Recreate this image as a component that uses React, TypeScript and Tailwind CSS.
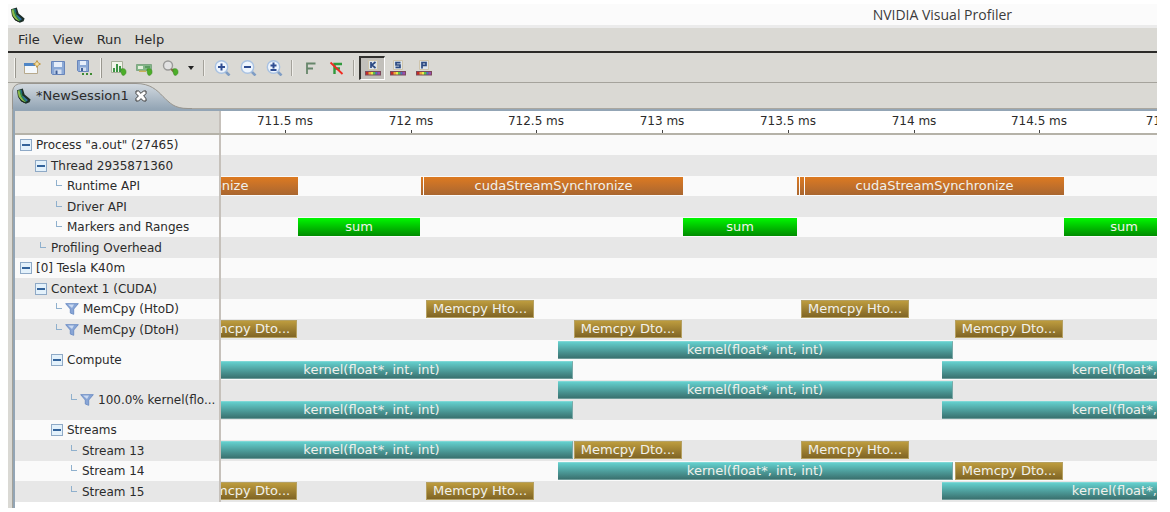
import React from "react";

type Kind = "api" | "range" | "copy" | "kernel";
type Bar = { kind: Kind; start: number; end: number; text?: string };
type Row = {
  label: string;
  depth: number;
  group?: boolean;
  filter?: boolean;
  lanes?: Bar[][];
};

const SPAN = 936;

const FILL: Record<Kind, string> = {
  api: "bg-linear-to-b from-[#dd7a20] to-[#a9662f]",
  range: "bg-linear-to-b from-[#00f800] to-[#008c00]",
  copy: "border border-[#b5a061] bg-linear-to-b from-[#bd9c3e] to-[#806525]",
  kernel: "border-y border-r border-t-[#7fd8d6] border-r-[#7aa9a8] border-b-[#6f9b99] bg-linear-to-b from-[#63cfcd] to-[#3a7270]",
};

const KERNEL = "kernel(float*, int, int)";
const SYNC = "cudaStreamSynchronize";
const kernel = (start: number, end: number): Bar => ({ kind: "kernel", start, end, text: KERNEL });
const sync = (start: number, end: number): Bar => ({ kind: "api", start, end, text: SYNC });
const tick = (start: number, end: number): Bar => ({ kind: "api", start, end });
const sum = (start: number, end: number): Bar => ({ kind: "range", start, end, text: "sum" });
const htod = (start: number): Bar => ({ kind: "copy", start, end: start + 108, text: "Memcpy Hto..." });
const dtoh = (start: number): Bar => ({ kind: "copy", start, end: start + 108, text: "Memcpy Dto..." });

const k13 = kernel(-50, 352);
const k14 = kernel(337, 732);
const k15 = kernel(721, 1118);

const ROWS: Row[] = [
  { label: 'Process "a.out" (27465)', depth: 0, group: true },
  { label: "Thread 2935871360", depth: 1, group: true },
  {
    label: "Runtime API",
    depth: 2,
    lanes: [[sync(-180, 77), tick(200, 202), sync(203, 462), tick(576, 578), tick(579, 583), sync(584, 843)]],
  },
  { label: "Driver API", depth: 2 },
  { label: "Markers and Ranges", depth: 2, lanes: [[sum(77, 199), sum(462, 576), sum(843, 963)]] },
  { label: "Profiling Overhead", depth: 1 },
  { label: "[0] Tesla K40m", depth: 0, group: true },
  { label: "Context 1 (CUDA)", depth: 1, group: true },
  { label: "MemCpy (HtoD)", depth: 2, filter: true, lanes: [[htod(205), htod(580)]] },
  { label: "MemCpy (DtoH)", depth: 2, filter: true, lanes: [[dtoh(-32), dtoh(353), dtoh(734)]] },
  { label: "Compute", depth: 2, group: true, lanes: [[k14], [k13, k15]] },
  { label: "100.0% kernel(flo...", depth: 3, filter: true, lanes: [[k14], [k13, k15]] },
  { label: "Streams", depth: 2, group: true },
  { label: "Stream 13", depth: 3, lanes: [[k13, dtoh(353), htod(580)]] },
  { label: "Stream 14", depth: 3, lanes: [[k14, dtoh(734)]] },
  { label: "Stream 15", depth: 3, lanes: [[dtoh(-32), htod(205), k15]] },
];

const INDENT = ["pl-[5px]", "pl-5", "pl-9", "pl-[51px]"];

const TICKS = [
  { at: 64, text: "711.5 ms" },
  { at: 190, text: "712 ms" },
  { at: 315, text: "712.5 ms" },
  { at: 441, text: "713 ms" },
  { at: 567, text: "713.5 ms" },
  { at: 693, text: "714 ms" },
  { at: 818, text: "714.5 ms" },
  { at: 947, text: "715 ms" },
];

const pct = (v: number) => `${(v / SPAN) * 100}%`;

function Logo() {
  return (
    <svg viewBox="0 0 16 16" className="size-4 shrink-0" aria-hidden="true">
      <path d="M1 2.200 6.800.500 8.600 6.500l6 5-1 2.700-3.800 1.600-4.600-2.600L2 9z" fill="#1d2f28" />
      <path d="M1.600 2.700 3.600 2l1.600 6.300 4 5.700-.8.3-3.200-2L2.600 8.600z" fill="#8dba4a" />
      <path d="M3.200 2.200 5 1.700 6.400 7.600l4.400 5.200-1.300 1.500-4.300-5.600z" fill="#2f8a54" />
      <path d="m7.200 8 4.600 4-1 1.600-4.400-5z" fill="#2f6fa8" />
      <path d="M4.600 2 5.600 1.700l.9 3.600-1 .3z" fill="#1f5f86" />
      <path d="m3 9.500 2.500 2.700 3.300 2-.3.800-3.400-1.700-2-3z" fill="#14201a" />
    </svg>
  );
}

function Dot({ x, y }: { x: number; y: number }) {
  return <path d={`M${x - 2} ${y - 3}c3-1 5 0 5 3 0 2-1 3-3 3.500-1-.5-2-2-2-6.500z`} fill="#4cae28" stroke="#3b8d22" strokeWidth=".6" />;
}

function Floppy({ dots }: { dots?: boolean }) {
  return (
    <svg viewBox="0 0 17 16" className="h-4 w-[17px]" aria-hidden="true">
      <path d={dots ? "M1.500.5h11v11h-10l-1-1z" : "M1.500 1.500h13v13h-12l-1-1z"} fill="#8ba9d6" stroke="#6885ba" />
      <path d={dots ? "M4 1h6v4H4z" : "M4 2h8v5H4z"} fill="#e6eefa" />
      <path d={dots ? "M4 7.500h6V11H4z" : "M4.500 9.500h7V14h-7z"} fill="#d4dff0" />
      <path d={dots ? "M5 8h2v3H5z" : "M5.500 10.500h2V14h-2z"} fill="#3f5f98" />
      {dots && <path d="M6 13h2v2H6zM10 13h2v2h-2zM14 13h2v2h-2z" fill="#3d8b33" />}
    </svg>
  );
}

function NewIcon() {
  return (
    <svg viewBox="0 0 17 16" className="h-4 w-[17px]" aria-hidden="true">
      <path d="M.5 3.500h13v10H.5z" fill="#f4f8fb" stroke="#b7a98c" />
      <path d="M0 3h11v3H0z" fill="#4f86c6" />
      <path d="m13 .5 1.200 2.300L16.500 4l-2.300 1.200L13 7.500l-1.200-2.300L9.500 4l2.300-1.200z" fill="#f3dfa0" stroke="#c09a4c" strokeWidth="1" />
    </svg>
  );
}

function ChartIcon() {
  return (
    <svg viewBox="0 0 17 16" className="h-4 w-[17px]" aria-hidden="true">
      <path d="M1.500 1.500h11v11h-11z" fill="#f1f5e9" stroke="#a8b09a" />
      <path d="M3 8h2v4H3zM6 4h2v8H6zM9 6h2v6H9z" fill="#3c9444" />
      <Dot x={13} y={12} />
    </svg>
  );
}

function CardIcon() {
  return (
    <svg viewBox="0 0 17 16" className="h-4 w-[17px]" aria-hidden="true">
      <path d="M.5 4.500h15v6H.5z" fill="#83b688" stroke="#7fa783" />
      <path d="M2 6h5v3H2z" fill="#e4efdc" />
      <path d="M9 6h5v2H9z" fill="#5b9b61" />
      <path d="M3 10.500h7V12H3z" fill="#c8b25a" />
      <Dot x={13} y={12} />
    </svg>
  );
}

function SearchIcon() {
  return (
    <svg viewBox="0 0 17 16" className="h-4 w-[17px]" aria-hidden="true">
      <circle cx="6" cy="5.500" r="4.500" fill="#e2e2e2" stroke="#9a9a98" strokeWidth="1.400" />
      <path d="m9.200 9 3 3" stroke="#8a6a48" strokeWidth="2.200" />
      <Dot x={13} y={12} />
    </svg>
  );
}

function ZoomIcon({ mark }: { mark: string }) {
  return (
    <svg viewBox="0 0 17 16" className="h-4 w-[17px]" aria-hidden="true">
      <path d="m11 11 4.500 4.500" stroke="#7f9dc4" strokeWidth="2.600" />
      <circle cx="7.500" cy="7" r="6.200" fill="#eef5fd" stroke="#a9c2e2" strokeWidth="1.400" />
      <path d={mark} stroke="#2f4d92" strokeWidth="2" fill="none" />
    </svg>
  );
}

function FlagIcon({ off }: { off?: boolean }) {
  return (
    <svg viewBox="0 0 17 16" className="h-4 w-[17px]" aria-hidden="true">
      <path
        d={off ? "M6.500 14V4H14M6.500 8.500H12" : "M5 14V3.500h8.500M5 8.500h6"}
        stroke={off ? "#2f9a3c" : "#66866a"}
        strokeWidth={off ? 2.400 : 1.800}
        fill="none"
      />
      {off && <path d="m2.500 2.500 12 11.500" stroke="#f02a20" strokeWidth="1.800" />}
    </svg>
  );
}

function PaletteIcon({ mark }: { mark: string }) {
  return (
    <svg viewBox="0 0 16 16" className="size-4" aria-hidden="true">
      <path d="M3.500.5h9v9h-9z" fill="#dfe6ea" stroke="#cfc5ac" />
      <path d={mark} stroke="#2c4a82" strokeWidth="1.700" fill="none" />
      <path d="M0 11h16v4.500H0z" fill="#7b4a5a" />
      <path d="M1 12h2.500v2.500H1z" fill="#c62b26" />
      <path d="M3.500 12H6v2.500H3.500z" fill="#f0a63a" />
      <path d="M6 12h2v2.500H6z" fill="#ecec4a" />
      <path d="M8 12h2.500v2.500H8z" fill="#58c04e" />
      <path d="M10.500 12h2v2.500h-2z" fill="#4a75c0" />
      <path d="M12.500 12H15v2.500h-2.500z" fill="#9a4db0" />
    </svg>
  );
}

function Tool({ label, pressed, children }: { label: string; pressed?: boolean; children: React.ReactNode }) {
  return (
    <button
      type="button"
      aria-label={label}
      aria-pressed={pressed}
      className={
        pressed
          ? "flex h-6 w-[26px] items-center justify-center border-t-2 border-l-2 border-[#33322f] border-r border-b border-r-white border-b-white bg-[#c2c0bb]"
          : "flex h-6 w-[26px] items-center justify-center"
      }
    >
      {children}
    </button>
  );
}

function Grip() {
  return <span className="mx-[3px] h-5 w-[2px] border-r border-[#99978f] bg-[#f5f4f0]" />;
}

function Divider() {
  return <span className="mx-1 h-4 w-[2px] border-l border-[#a3a19a] bg-[#efeeea]" />;
}

function Toggle({ label }: { label: string }) {
  return (
    <button
      type="button"
      aria-label={`Collapse ${label}`}
      className="flex size-3 shrink-0 items-center justify-center border border-[#8ea9c6] bg-[#e3f1fb]"
    >
      <span className="h-[2px] w-2 bg-[#33639b]" />
    </button>
  );
}

function Branch() {
  return (
    <span className="flex h-3 w-3 shrink-0 justify-end pr-px">
      <span className="h-[6px] w-[6px] border-b border-l border-[#8fb0cd]" />
    </span>
  );
}

function Funnel() {
  return (
    <svg viewBox="0 0 14 12" className="mr-1 h-3 w-[14px] shrink-0" aria-hidden="true">
      <path d="M.7.700h12.600L8.700 6v5.300L5.300 10V6z" fill="#88a5d6" stroke="#7190c6" />
      <path d="M3 1.500h6L7 5z" fill="#cbdaf1" />
    </svg>
  );
}

function TimelineBar({ bar }: { bar: Bar }) {
  return (
    <div
      className={`absolute inset-y-px flex items-center justify-center overflow-hidden text-[13px] whitespace-nowrap text-[#f1f1ec] ${FILL[bar.kind]}`}
      style={{ left: pct(bar.start), width: pct(bar.end - bar.start) }}
    >
      {bar.text}
    </div>
  );
}

function TimelineRow({ row, index }: { row: Row; index: number }) {
  const lanes = row.lanes ?? [[]];
  const height = lanes.length > 1 ? "h-10" : index % 2 === 0 ? "h-5" : "h-[21px]";
  const shade = index % 2 === 0 ? "bg-[#fafafa]" : "bg-[#e7e7e7]";
  return (
    <div className={`flex ${height} ${shade}`}>
      <div className={`flex w-[204px] shrink-0 items-center ${INDENT[row.depth]}`}>
        {row.group ? <Toggle label={row.label} /> : <Branch />}
        <span className={row.filter ? "flex items-center pl-[2px] whitespace-nowrap" : "pl-1 whitespace-nowrap"}>
          {row.filter && <Funnel />}
          {row.label}
        </span>
      </div>
      <div className="w-[2px] shrink-0 bg-[#c6c1bb]" />
      <div className="flex min-w-0 grow flex-col overflow-hidden">
        {lanes.map((bars, i) => (
          <div key={i} className="relative max-h-5 grow">
            {bars.map((bar) => (
              <TimelineBar key={bar.start} bar={bar} />
            ))}
          </div>
        ))}
      </div>
    </div>
  );
}

export default function App() {
  return (
    <div className="bg-white pt-1 pr-[13px] pb-1 pl-2 font-['DejaVu_Sans',sans-serif] text-xs text-[#2b2b2b]">
      <header className="flex h-6 items-center justify-between border-b-3 border-[#ebebeb] bg-[#fbfbfb] pr-[145px] pl-[2px]">
        <Logo />
        <h1 className="font-['Open_Sans',sans-serif] text-sm text-[#3c3c3c]">NVIDIA Visual Profiler</h1>
      </header>

      <div className="bg-[#dad9d4]">
        <nav className="flex h-[25px] items-center gap-[13px] border-b-2 border-[#2b2a28] pl-[10px] text-[13px]">
          <button type="button">File</button>
          <button type="button">View</button>
          <button type="button">Run</button>
          <button type="button">Help</button>
        </nav>

        <div className="flex h-[30px] items-center border-b border-[#a5a39c] pl-[3px]">
          <Grip />
          <Tool label="New session"><NewIcon /></Tool>
          <Tool label="Save"><Floppy /></Tool>
          <Tool label="Save as"><Floppy dots /></Tool>
          <Grip />
          <Tool label="Run analysis"><ChartIcon /></Tool>
          <Tool label="Configure device"><CardIcon /></Tool>
          <Tool label="Analyze"><SearchIcon /></Tool>
          <button type="button" aria-label="Analyze options" className="flex h-6 w-4 items-center justify-center">
            <svg viewBox="0 0 6 4" className="h-1 w-[6px]" aria-hidden="true">
              <path d="M0 0h6L3 4z" fill="#222" />
            </svg>
          </button>
          <Divider />
          <Tool label="Zoom in"><ZoomIcon mark="M4 7h7M7.500 3.500v7" /></Tool>
          <Tool label="Zoom out"><ZoomIcon mark="M4 7h7" /></Tool>
          <Tool label="Zoom to fit"><ZoomIcon mark="M4.500 5.500h6M7.500 2.500v6M4.500 10h6" /></Tool>
          <Divider />
          <Tool label="Set filter"><FlagIcon /></Tool>
          <Tool label="Clear filter"><FlagIcon off /></Tool>
          <Divider />
          <Tool label="Color by kernel" pressed><PaletteIcon mark="M6 2v6M10.500 2 6.800 5l3.700 3" /></Tool>
          <Tool label="Color by stream"><PaletteIcon mark="M10.500 2.700H6v2.300h4v2.300H5.500" /></Tool>
          <Tool label="Color by process"><PaletteIcon mark="M6 8.500V2.700h4v2.600H6" /></Tool>
        </div>

        <div className="pl-1">
          <div className="flex h-[26px] border-b border-[#aaa79f]">
            <div className="relative flex h-[26px] w-[180px] items-center gap-1 pl-1 text-[13px]">
              <svg viewBox="0 0 180 26" className="absolute inset-0 h-full w-full" aria-hidden="true">
                <defs>
                  <linearGradient id="tab" x1="0" y1="0" x2="0" y2="1">
                    <stop offset="0" stopColor="#d3dae0" />
                    <stop offset="1" stopColor="#93a5b5" />
                  </linearGradient>
                </defs>
                <path d="M.5 26V8Q1.500.500 10 .5H124C138 .5 145 7 151 13.500 158 20 162 25.500 176 25.500L180 26z" fill="url(#tab)" />
                <path d="M.5 26V8Q1.500.500 10 .5H124C138 .5 145 7 151 13.500 158 20 162 25.500 176 25.500H180" fill="none" stroke="#98958e" />
              </svg>
              <span className="relative flex"><Logo /></span>
              <span className="relative">*NewSession1</span>
              <button type="button" aria-label="Close tab" className="relative ml-[2px]">
                <svg viewBox="0 0 12 12" className="size-3" aria-hidden="true">
                  <path d="M1 1h2.600L6 3.400 8.400 1H11v2.600L8.600 6l2.400 2.400V11H8.400L6 8.600 3.600 11H1V8.400L3.400 6 1 3.600z" fill="#fdfdfd" stroke="#3c3c3c" />
                </svg>
              </button>
            </div>
          </div>

          <div className="border-l border-[#a3a29b]">
            <main className="border-t-2 border-l-2 border-[#93a5b5] bg-white">
              <div className="flex h-6 border-b-2 border-[#b5b2a8]">
                <div className="w-[204px] shrink-0 bg-[#dad9d4]" />
                <div className="w-[2px] shrink-0 bg-[#c6c1bb]" />
                <div className="relative min-w-0 grow overflow-hidden">
                  {TICKS.map((t) => (
                    <div
                      key={t.text}
                      className="absolute inset-y-0 flex w-20 -translate-x-1/2 flex-col items-center justify-between pt-[2px]"
                      style={{ left: pct(t.at) }}
                    >
                      <span className="whitespace-nowrap">{t.text}</span>
                      <span className="h-[3px] w-px bg-[#444]" />
                    </div>
                  ))}
                </div>
              </div>
              {ROWS.map((row, i) => (
                <TimelineRow key={row.label} row={row} index={i} />
              ))}
              <div className="h-[6px]" />
            </main>
          </div>
        </div>
      </div>
    </div>
  );
}
